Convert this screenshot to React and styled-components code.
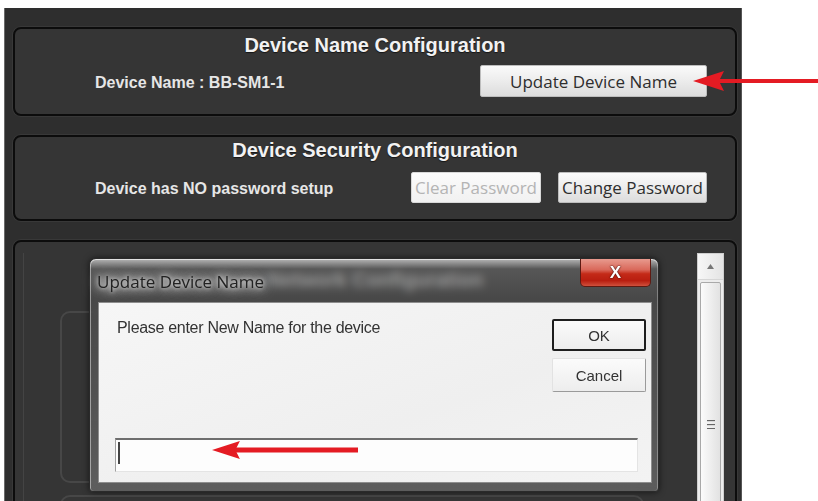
import React from 'react'
import styled, { createGlobalStyle } from 'styled-components'

const GlobalStyle = createGlobalStyle`
  html, body {
    margin: 0;
    padding: 0;
    background: #ffffff;
    font-family: "Liberation Sans", Arial, sans-serif;
  }
`

const Page = styled.div`
  position: relative;
  width: 818px;
  height: 501px;
  overflow: hidden;
  box-sizing: border-box;
  padding: 8px 0 0 4px;
`

const Panel = styled.div`
  width: 738px;
  height: 493px;
  box-sizing: border-box;
  padding: 19px 0 0 9px;
  background: #2e2e2e;
  box-shadow: inset 1px 0 0 #6a6a6a, inset -1px 0 0 #555;
  display: flex;
  flex-direction: column;
  gap: 19px;
  overflow: hidden;
`

const Card = styled.div`
  flex: none;
  width: 724px;
  height: ${p => p.$height}px;
  box-sizing: border-box;
  border: 2px solid #0c0c0c;
  border-radius: 8px;
  background: #353535;
  box-shadow: 0 0 0 1px rgba(255, 255, 255, 0.05);
  display: flex;
  flex-direction: column;
  padding-top: ${p => p.$padTop || 0}px;
`

const ScrollCard = styled(Card)`
  flex-direction: row;
  padding: 11px 11px 0 8px;
`

const CardTitle = styled.div`
  text-align: center;
  font-size: 20px;
  line-height: 24px;
  font-weight: bold;
  color: #f2f2f2;
  text-shadow: 0 1px 1px rgba(0, 0, 0, 0.6);
`

const Row = styled.div`
  display: flex;
  align-items: center;
  justify-content: space-between;
  margin-top: ${p => p.$gap}px;
  padding: 0 28px 0 80px;
`

const Label = styled.span`
  font-size: 16px;
  font-weight: bold;
  color: #e6e6e6;
  margin-top: 3px;
`

const ButtonGroup = styled.div`
  display: flex;
  gap: 17px;
`

const FlatButton = styled.button`
  box-sizing: border-box;
  width: ${p => p.$width}px;
  height: ${p => p.$height}px;
  padding: 0;
  border: 1px solid ${p => (p.disabled ? '#d8d8d8' : '#bdbdbd')};
  border-radius: 2px;
  background: ${p =>
    p.disabled
      ? 'linear-gradient(#fbfbfb, #f1f1f1)'
      : 'linear-gradient(#fafafa 0%, #ececec 50%, #dcdcdc 100%)'};
  color: ${p => (p.disabled ? '#b4b4b4' : '#2e2e2e')};
  font-family: "Open Sans", "Noto Sans", sans-serif;
  font-size: 17px;
  line-height: 1;
  cursor: default;
`

const ContentArea = styled.div`
  flex: 1;
  display: flex;
  flex-direction: column;
  border-left: 1px solid #444;
  padding-top: 15px;
`

const SectionTitle = styled(CardTitle)`
  padding-left: 30px;
`

const GroupBox = styled.div`
  flex: none;
  width: 580px;
  height: ${p => p.$height}px;
  margin: ${p => p.$top}px 0 0 36px;
  border: 2px solid #474747;
  border-radius: 10px;
`

const Scrollbar = styled.div`
  width: 27px;
  box-sizing: border-box;
  border: 1px solid #cfcfcf;
  background: #ececec;
  display: flex;
  flex-direction: column;
`

const ScrollUp = styled.div`
  height: 25px;
  display: flex;
  align-items: center;
  justify-content: center;
  border-bottom: 1px solid #d6d6d6;
  background: linear-gradient(to right, #f7f7f7, #e4e4e4);
`

const Thumb = styled.div`
  flex: 1;
  margin: 2px 2px 0;
  border: 1px solid #a9a9a9;
  border-radius: 2px;
  background: linear-gradient(to right, #fbfbfb, #e2e2e2);
  display: flex;
  justify-content: center;
`

const Grip = styled.div`
  margin-top: 137px;
  width: 8px;
  height: 9px;
  background: repeating-linear-gradient(#666 0 1px, #d8d8d8 1px 2px, transparent 2px 4px);
`

/* modal window with a glass frame */
const Dialog = styled.div`
  position: absolute;
  left: 89px;
  top: 258px;
  width: 570px;
  height: 234px;
  box-sizing: border-box;
  border: 1px solid #2a2a2a;
  border-radius: 7px 7px 4px 4px;
  padding: 0 6px 8px 8px;
  display: flex;
  flex-direction: column;
  background: linear-gradient(
    rgba(215, 215, 215, 0.8) 0px,
    rgba(110, 110, 110, 0.6) 10px,
    rgba(85, 85, 85, 0.6) 40px,
    rgba(110, 110, 110, 0.7) 100%
  );
  backdrop-filter: blur(4px);
  box-shadow: inset 0 1px 0 rgba(255, 255, 255, 0.6), inset 1px 0 0 rgba(255, 255, 255, 0.45),
    inset -1px 0 0 rgba(255, 255, 255, 0.3), 0 0 6px rgba(0, 0, 0, 0.6);
`

const TitleBar = styled.div`
  height: 43px;
  display: flex;
  justify-content: space-between;
  align-items: flex-start;
`

const DialogTitle = styled.span`
  margin: 12px 0 0 -1px;
  font-family: "Open Sans", "Noto Sans", sans-serif;
  font-size: 17px;
  line-height: 22px;
  color: #222;
  text-shadow: 0 0 4px #e2e2e2, 0 0 8px #d4d4d4, 0 0 12px #c8c8c8, 0 0 16px #bbb;
`

const CloseButton = styled.div`
  width: 71px;
  height: 28px;
  margin-right: 1px;
  box-sizing: border-box;
  border: 1px solid #5e1a12;
  border-top: none;
  border-radius: 0 0 5px 5px;
  background: linear-gradient(#e89a8e 0%, #d9685a 40%, #c42a18 55%, #b81e10 80%, #d0503c 100%);
  display: flex;
  align-items: center;
  justify-content: center;
  color: #fff;
  font-weight: bold;
  font-size: 17px;
  text-shadow: 0 0 2px #4a0b04, 0 0 1px #4a0b04;
`

const ClientArea = styled.div`
  flex: 1;
  border: 1px solid #8e8e8e;
  background: linear-gradient(160deg, #f6f6f6, #efefef 60%, #f3f3f3);
  display: flex;
  flex-direction: column;
`

const PromptRow = styled.div`
  display: flex;
  justify-content: space-between;
  align-items: flex-start;
  padding: 16px 5px 0 18px;
`

const Prompt = styled.span`
  font-size: 16px;
  line-height: 18px;
  letter-spacing: -0.3px;
  color: #333;
`

const ButtonColumn = styled.div`
  display: flex;
  flex-direction: column;
  gap: 7px;
`

const DialogButton = styled.button`
  box-sizing: border-box;
  width: 94px;
  height: ${p => (p.$default ? 32 : 34)}px;
  padding: 0;
  border: ${p => (p.$default ? '2px solid #1e1e1e' : '1px solid #e2e2e2')};
  border-right-color: ${p => (p.$default ? '#1e1e1e' : '#9a9a9a')};
  border-bottom-color: ${p => (p.$default ? '#1e1e1e' : '#9a9a9a')};
  border-radius: 2px;
  background: linear-gradient(#fbfbfb, #ededed);
  font-family: "Liberation Sans", Arial, sans-serif;
  font-size: 15px;
  color: #333;
  cursor: default;
`

const NameInput = styled.div`
  height: 34px;
  margin: auto 13px 10px 16px;
  box-sizing: border-box;
  border: 1px solid #e4e4e4;
  border-top: 2px solid #6e6e6e;
  border-left: 1px solid #a0a0a0;
  background: #fdfdfd;
  padding: 2px 0 0 2px;
`

const Caret = styled.div`
  width: 2px;
  height: 22px;
  background: #444;
`

const Annotation = styled.svg`
  position: absolute;
  overflow: visible;
`

function RedArrow({ left, top, length, head, thick }) {
  const h = head / 2
  return (
    <Annotation style={{ left, top }} width={length} height={head}>
      <polygon
        points={`0,${h} ${head * 1.55},0 ${head * 1.3},${h} ${head * 1.55},${head}`}
        fill="#e41b23"
      />
      <rect x={head * 1.25} y={h - thick / 2} width={length - head * 1.25} height={thick} fill="#e41b23" />
    </Annotation>
  )
}

export default function App() {
  return (
    <Page>
      <GlobalStyle />
      <Panel>
        <Card $height={89} $padTop={4}>
          <CardTitle>Device Name Configuration</CardTitle>
          <Row $gap={8}>
            <Label>Device Name : BB-SM1-1</Label>
            <FlatButton $width={227} $height={32}>Update Device Name</FlatButton>
          </Row>
        </Card>

        <Card $height={86} $padTop={1}>
          <CardTitle>Device Security Configuration</CardTitle>
          <Row $gap={10}>
            <Label>Device has NO password setup</Label>
            <ButtonGroup>
              <FlatButton $width={130} $height={31} disabled>Clear Password</FlatButton>
              <FlatButton $width={149} $height={31}>Change Password</FlatButton>
            </ButtonGroup>
          </Row>
        </Card>

        <ScrollCard $height={300}>
          <ContentArea>
            <SectionTitle>Network Configuration</SectionTitle>
            <GroupBox $top={19} $height={168} />
            <GroupBox $top={12} $height={80} />
          </ContentArea>
          <Scrollbar>
            <ScrollUp>
              <svg width="7" height="5" viewBox="0 0 7 5">
                <polygon points="3.5,0 7,5 0,5" fill="#777" />
              </svg>
            </ScrollUp>
            <Thumb>
              <Grip />
            </Thumb>
          </Scrollbar>
        </ScrollCard>
      </Panel>

      <Dialog>
        <TitleBar>
          <DialogTitle>Update Device Name</DialogTitle>
          <CloseButton>X</CloseButton>
        </TitleBar>
        <ClientArea>
          <PromptRow>
            <Prompt>Please enter New Name for the device</Prompt>
            <ButtonColumn>
              <DialogButton $default>OK</DialogButton>
              <DialogButton>Cancel</DialogButton>
            </ButtonColumn>
          </PromptRow>
          <NameInput>
            <Caret />
          </NameInput>
        </ClientArea>
      </Dialog>

      <RedArrow left={693} top={71} length={125} head={20} thick={4} />
      <RedArrow left={212} top={441} length={146} head={18} thick={5} />
    </Page>
  )
}
